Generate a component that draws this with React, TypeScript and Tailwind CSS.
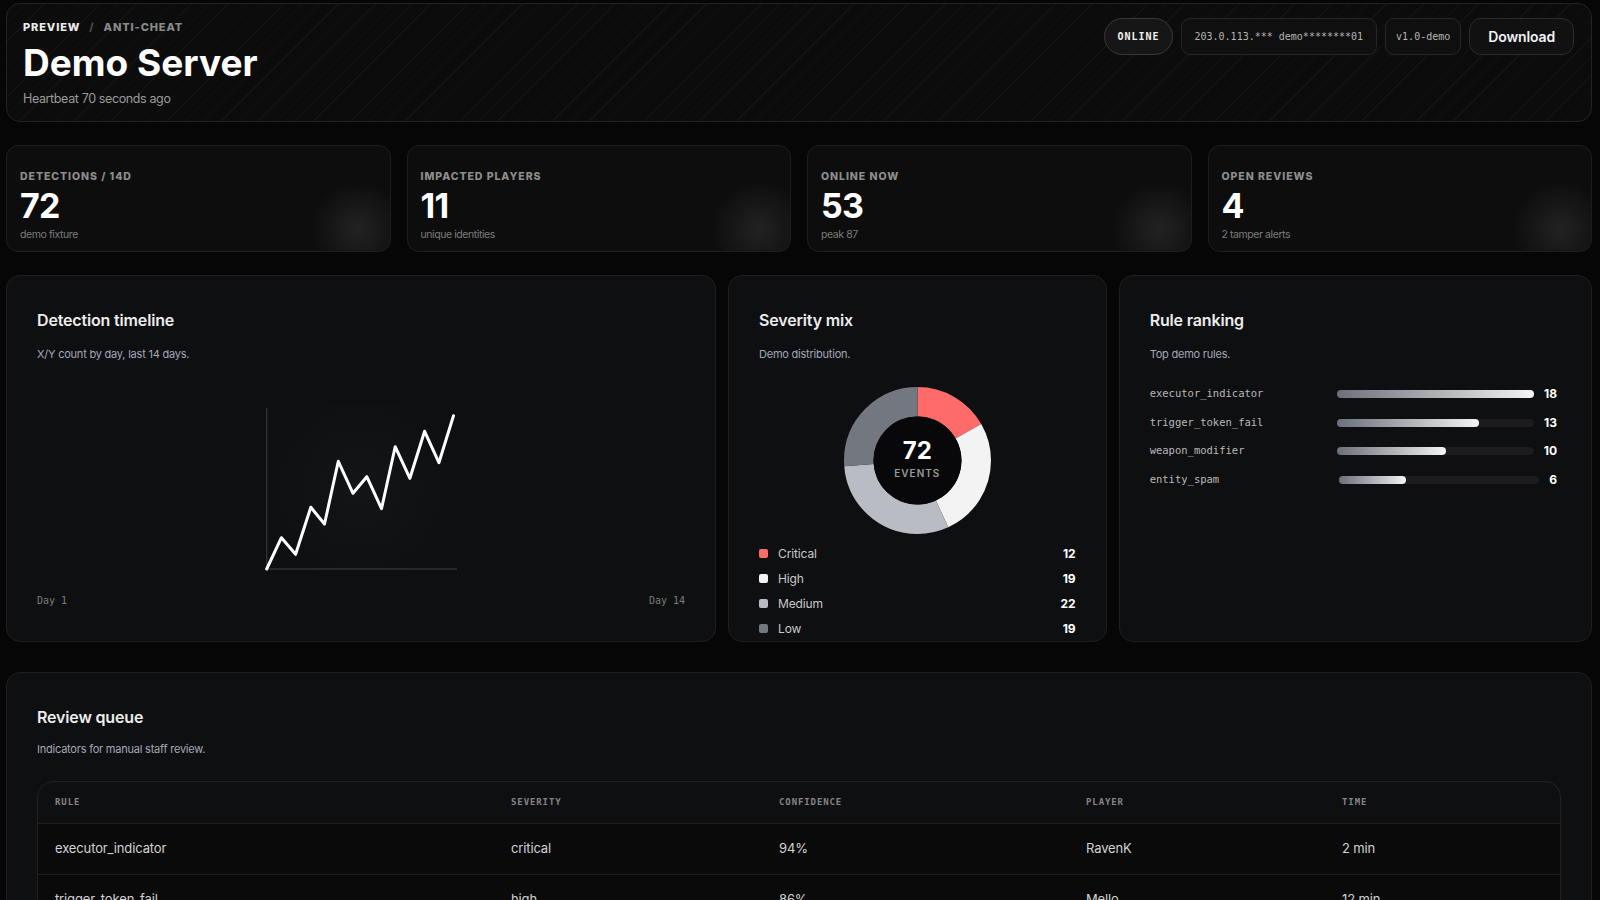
import React from "react";

const MONO = "[font-family:'DejaVu_Sans_Mono',monospace]";

const STATS = [
  { label: "Detections / 14d", value: "72", sub: "demo fixture" },
  { label: "Impacted players", value: "11", sub: "unique identities" },
  { label: "Online now", value: "53", sub: "peak 87" },
  { label: "Open reviews", value: "4", sub: "2 tamper alerts" },
];

const SEVERITY = [
  { label: "Critical", value: 12, color: "#ff6b6b", swatch: "bg-[#ff6b6b]" },
  { label: "High", value: 19, color: "#f3f3f3", swatch: "bg-[#f3f3f3]" },
  { label: "Medium", value: 22, color: "#b9bcc2", swatch: "bg-[#b9bcc2]" },
  { label: "Low", value: 19, color: "#727780", swatch: "bg-[#727780]" },
];

const RULES = [
  { name: "executor_indicator", count: 18 },
  { name: "trigger_token_fail", count: 13 },
  { name: "weapon_modifier", count: 10 },
  { name: "entity_spam", count: 6 },
];

const QUEUE = [
  { rule: "executor_indicator", severity: "critical", confidence: "94%", player: "RavenK", time: "2 min" },
  { rule: "trigger_token_fail", severity: "high", confidence: "86%", player: "Mello", time: "12 min" },
  { rule: "weapon_modifier", severity: "medium", confidence: "71%", player: "Kite_09", time: "26 min" },
  { rule: "entity_spam", severity: "low", confidence: "58%", player: "Juno", time: "41 min" },
];

// timeline points, svg space (200 x 170)
const POINTS: [number, number][] = [
  [5.7, 166], [20.4, 134.7], [34.6, 151.3], [49.8, 104.3], [63.5, 121], [77.3, 58.3], [92, 90.3],
  [105.8, 73.7], [120.5, 105.7], [134.2, 43.7], [148.9, 75.3], [163.6, 28.3], [177.9, 59.7], [192.5, 12.7],
];

function Timeline() {
  const d = POINTS.map((p, i) => `${i === 0 ? "M" : "L"}${p[0]} ${p[1]}`).join(" ");
  return (
    <svg width="200" height="170" viewBox="0 0 200 170">
      <line x1="5.7" y1="4.7" x2="5.7" y2="166" stroke="#303033" strokeWidth="1.5" />
      <line x1="5.7" y1="166" x2="196" y2="166" stroke="#303033" strokeWidth="1.5" />
      <path d={d} fill="none" stroke="#ffffff" strokeWidth="3" strokeLinejoin="round" strokeLinecap="round" />
    </svg>
  );
}

function Donut() {
  const total = SEVERITY.reduce((s, x) => s + x.value, 0);
  const r = 58.75;
  const c = 2 * Math.PI * r;
  let acc = 0;
  return (
    <div className="relative h-[147px] w-[147px]">
      <svg width="147" height="147" viewBox="0 0 147 147">
        <g transform="rotate(-90 73.5 73.5)">
          {SEVERITY.map((s) => {
            const len = (s.value / total) * c;
            const el = (
              <circle
                key={s.label}
                cx="73.5"
                cy="73.5"
                r={r}
                fill="none"
                stroke={s.color}
                strokeWidth="29.5"
                strokeDasharray={`${len} ${c - len}`}
                strokeDashoffset={-acc}
              />
            );
            acc += len;
            return el;
          })}
        </g>
        <circle cx="73.5" cy="73.5" r="44" fill="#08080a" />
      </svg>
      <div className="absolute inset-0 flex flex-col items-center justify-center">
        <span className="mt-[-3px] text-[24px] font-bold leading-7 text-white">72</span>
        <span className="text-[10px] font-semibold uppercase leading-4 tracking-[0.1em] text-[#9a9a9a]">Events</span>
      </div>
    </div>
  );
}

function CardHead({ title, sub, gap = "mt-[14px]" }: { title: string; sub: string; gap?: string }) {
  return (
    <>
      <h2 className="text-[16px] font-semibold leading-6 tracking-[-0.01em] text-[#ececec]">{title}</h2>
      <p className={`${gap} text-[11px] leading-4 tracking-[-0.02em] text-[#a5a7ba]`}>{sub}</p>
    </>
  );
}

export default function App() {
  return (
    <div className="min-h-screen bg-[#060606] pb-10 pl-[6px] pr-[8px] pt-[3px] text-white [font-family:Inter,'Noto_Sans',sans-serif]">
      {/* header */}
      <header className="flex h-[119px] items-start justify-between rounded-[14px] border border-[#232325] bg-[#0c0c0d] bg-[repeating-linear-gradient(135deg,rgba(255,255,255,0.028)_0px,rgba(255,255,255,0.028)_1px,transparent_1px,transparent_13px)] pl-4 pr-[17px] pt-[14px]">
        <div>
          <div className="flex h-4 items-center gap-[9px] pt-[3px] text-[11px] font-extrabold uppercase tracking-[0.08em]">
            <span className="text-[#ececec]">Preview</span>
            <span className="text-[#4a4a4a]">/</span>
            <span className="text-[#8a8a8a]">Anti-Cheat</span>
          </div>
          <h1 className="mt-[9px] text-[37px] font-bold leading-[40px] tracking-[0em] text-white">Demo Server</h1>
          <p className="mt-[7px] text-[12.5px] leading-[18px] tracking-[-0.03em] text-[#9b9b9b]">Heartbeat 70 seconds ago</p>
        </div>
        <div className="flex items-center gap-2">
          <span className={`flex h-[37px] items-center rounded-full border border-[#3a3a3c] bg-[#161617] px-[12px] text-[10px] font-bold tracking-[0.1em] text-[#f0f0f0] ${MONO}`}>
            ONLINE
          </span>
          <span className={`flex h-[37px] items-center rounded-[9px] border border-[#262628] bg-[#0f0f10] px-[13px] text-[10px] text-[#b5b5b5] ${MONO}`}>
            203.0.113.*** demo********01
          </span>
          <span className={`flex h-[37px] items-center rounded-[9px] border border-[#262628] bg-[#0f0f10] px-[10px] text-[10px] text-[#b5b5b5] ${MONO}`}>
            v1.0-demo
          </span>
          <button className="flex h-[37px] items-center rounded-[12px] border border-[#2c2c2e] bg-[#111112] px-[18px] text-[14px] font-semibold tracking-[-0.01em] text-[#f2f2f2]">
            Download
          </button>
        </div>
      </header>

      {/* stats */}
      <div className="mt-[23px] grid grid-cols-4 gap-4">
        {STATS.map((s) => (
          <div
            key={s.label}
            className="h-[107px] rounded-[12px] border border-[#1e1e20] bg-[#0d0d0e] bg-[radial-gradient(circle_at_351px_83px,rgba(255,255,255,0.09),transparent_48px)] px-[13px] pt-[23px]"
          >
            <div className="text-[10.5px] font-extrabold uppercase leading-4 tracking-[0.09em] text-[#8d8d8d]">{s.label}</div>
            <div className="mt-[1px] text-[34px] font-bold leading-[40px] tracking-[-0.02em] text-white">{s.value}</div>
            <div className="mt-[1px] text-[10.5px] leading-4 tracking-[-0.04em] text-[#7b7b7b]">{s.sub}</div>
          </div>
        ))}
      </div>

      {/* charts */}
      <div className="mt-[23px] grid h-[366px] grid-cols-[1.5fr_0.8fr_1fr] gap-3">
        <section className="rounded-[14px] border border-[#1f1f22] bg-[#0e0f11] px-[30px] pt-[32px]">
          <CardHead title="Detection timeline" sub="X/Y count by day, last 14 days." />
          <div className="mt-[41px] flex justify-center bg-[radial-gradient(circle_at_center,rgba(255,255,255,0.025),transparent_105px)]">
            <Timeline />
          </div>
          <div className={`mt-[20px] flex justify-between text-[10px] leading-4 text-[#7c7c7c] ${MONO}`}>
            <span>Day 1</span>
            <span>Day 14</span>
          </div>
        </section>

        <section className="rounded-[14px] border border-[#1f1f22] bg-[#0e0f11] px-[30px] pt-[32px]">
          <CardHead title="Severity mix" sub="Demo distribution." />
          <div className="mt-[25px] flex justify-center">
            <Donut />
          </div>
          <div className="mt-[7px]">
            {SEVERITY.map((s) => (
              <div key={s.label} className="flex h-[25px] items-center">
                <span className={`h-[9px] w-[9px] rounded-[2px] ${s.swatch}`} />
                <span className="ml-[10px] flex-1 text-[12px] tracking-[-0.01em] text-[#c9c9c9]">{s.label}</span>
                <span className="text-[12px] font-bold text-white">{s.value}</span>
              </div>
            ))}
          </div>
        </section>

        <section className="rounded-[14px] border border-[#1f1f22] bg-[#0e0f11] pl-[30px] pr-[34px] pt-[32px]">
          <CardHead title="Rule ranking" sub="Top demo rules." />
          <div className="mt-[18px]">
            {RULES.map((r) => (
              <div key={r.name} className="grid h-[28.5px] grid-cols-[0.9fr_1fr_auto] items-center gap-2.5">
                <span className={`text-[10.5px] text-[#b9b9b9] ${MONO}`}>{r.name}</span>
                <div className="h-2 rounded-full bg-[#1c1c1f]">
                  <div
                    className="h-2 rounded-full bg-linear-to-r from-[#6c7078] to-[#f5f5f5]"
                    style={{ width: `${(r.count / 18) * 100}%` }}
                  />
                </div>
                <span className="text-[12px] font-bold text-white">{r.count}</span>
              </div>
            ))}
          </div>
        </section>
      </div>

      {/* review queue */}
      <section className="mt-[31px] rounded-[14px] border border-[#1f1f22] bg-[#0e0f11] px-[30px] pb-8 pt-[32px]">
        <CardHead title="Review queue" sub="Indicators for manual staff review." gap="mt-[12px]" />
        <div className="mt-[24px] overflow-hidden rounded-[16px] border border-[#222225]">
          <div className={`grid h-[42px] grid-cols-[456px_268px_307px_256px_1fr] items-center border-b border-[#1f1f22] text-[9px] font-bold uppercase tracking-[0.1em] text-[#858585] ${MONO}`}>
            <span className="pl-[17px]">Rule</span>
            <span className="pl-[17px]">Severity</span>
            <span className="pl-[17px]">Confidence</span>
            <span className="pl-[17px]">Player</span>
            <span className="pl-[17px]">Time</span>
          </div>
          {QUEUE.map((q) => (
            <div
              key={q.rule}
              className="grid h-[51px] grid-cols-[456px_268px_307px_256px_1fr] items-center border-b border-[#1f1f22] bg-[#0a0a0b] text-[13px] tracking-[-0.01em] text-[#d2d2d2] last:border-b-0"
            >
              <span className="pl-[17px]">{q.rule}</span>
              <span className="pl-[17px]">{q.severity}</span>
              <span className="pl-[17px]">{q.confidence}</span>
              <span className="pl-[17px]">{q.player}</span>
              <span className="pl-[17px]">{q.time}</span>
            </div>
          ))}
        </div>
      </section>
    </div>
  );
}
